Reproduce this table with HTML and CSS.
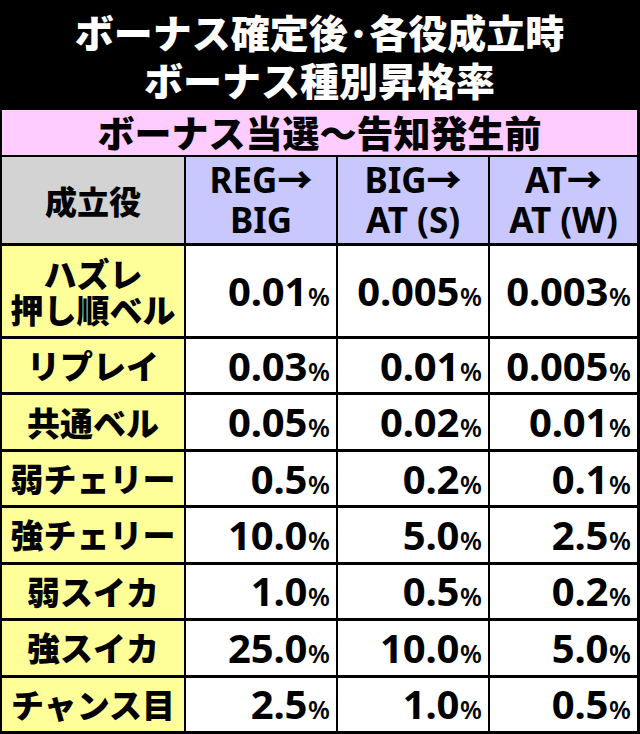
FILE: index.html
```html
<!DOCTYPE html>
<html lang="ja">
<head>
<meta charset="utf-8">
<title>ボーナス種別昇格率</title>
<link rel="stylesheet" href="styles.css">
</head>
<body>
<div class="page">
  <header class="title">
    <div class="title-line">ボーナス確定後<span class="dot">･</span>各役成立時</div>
    <div class="title-line">ボーナス種別昇格率</div>
  </header>
  <div class="band">ボーナス当選〜告知発生前</div>
  <div class="table">
    <div class="cell head-role">成立役</div>
    <div class="cell head-col"><span>REG<span class="arrow">→</span></span><span>BIG</span></div>
    <div class="cell head-col"><span>BIG<span class="arrow">→</span></span><span>AT (S)</span></div>
    <div class="cell head-col"><span>AT<span class="arrow">→</span></span><span>AT (W)</span></div>

    <div class="cell role two"><span>ハズレ</span><span>押し順ベル</span></div>
    <div class="cell num"><span class="val">0.01<span class="pct">%</span></span></div>
    <div class="cell num"><span class="val">0.005<span class="pct">%</span></span></div>
    <div class="cell num"><span class="val">0.003<span class="pct">%</span></span></div>

    <div class="cell role">リプレイ</div>
    <div class="cell num"><span class="val">0.03<span class="pct">%</span></span></div>
    <div class="cell num"><span class="val">0.01<span class="pct">%</span></span></div>
    <div class="cell num"><span class="val">0.005<span class="pct">%</span></span></div>

    <div class="cell role">共通ベル</div>
    <div class="cell num"><span class="val">0.05<span class="pct">%</span></span></div>
    <div class="cell num"><span class="val">0.02<span class="pct">%</span></span></div>
    <div class="cell num"><span class="val">0.01<span class="pct">%</span></span></div>

    <div class="cell role">弱チェリー</div>
    <div class="cell num"><span class="val">0.5<span class="pct">%</span></span></div>
    <div class="cell num"><span class="val">0.2<span class="pct">%</span></span></div>
    <div class="cell num"><span class="val">0.1<span class="pct">%</span></span></div>

    <div class="cell role">強チェリー</div>
    <div class="cell num"><span class="val">10.0<span class="pct">%</span></span></div>
    <div class="cell num"><span class="val">5.0<span class="pct">%</span></span></div>
    <div class="cell num"><span class="val">2.5<span class="pct">%</span></span></div>

    <div class="cell role">弱スイカ</div>
    <div class="cell num"><span class="val">1.0<span class="pct">%</span></span></div>
    <div class="cell num"><span class="val">0.5<span class="pct">%</span></span></div>
    <div class="cell num"><span class="val">0.2<span class="pct">%</span></span></div>

    <div class="cell role">強スイカ</div>
    <div class="cell num"><span class="val">25.0<span class="pct">%</span></span></div>
    <div class="cell num"><span class="val">10.0<span class="pct">%</span></span></div>
    <div class="cell num"><span class="val">5.0<span class="pct">%</span></span></div>

    <div class="cell role">チャンス目</div>
    <div class="cell num"><span class="val">2.5<span class="pct">%</span></span></div>
    <div class="cell num"><span class="val">1.0<span class="pct">%</span></span></div>
    <div class="cell num"><span class="val">0.5<span class="pct">%</span></span></div>
  </div>
</div>
</body>
</html>
```

FILE: styles.css
```css
html, body {
  margin: 0;
  padding: 0;
  background: #000;
}

.page {
  width: 640px;
  height: 734px;
  box-sizing: border-box;
  padding: 0 3px 3px 2px;
  background: #000;
  display: flex;
  flex-direction: column;
  font-family: "Noto Sans CJK JP", "Noto Sans", sans-serif;
  color: #000;
}

.title {
  height: 110px;
  flex: none;
  display: flex;
  flex-direction: column;
  align-items: center;
  justify-content: center;
  color: #fff;
  font-weight: 900;
  font-size: 39px;
  line-height: 48px;
  padding-bottom: 1px;
  box-sizing: border-box;
}

.dot {
  display: inline-block;
  margin: 0 1px;
}

.band {
  height: 45px;
  flex: none;
  margin-bottom: 2px;
  background: #ffccff;
  display: flex;
  align-items: center;
  justify-content: center;
  font-weight: 900;
  font-size: 37px;
  line-height: 1;
}

.table {
  flex: 1;
  display: grid;
  grid-template-columns: 182px 150px 150px 147px;
  grid-template-rows: 86px 90px repeat(7, 1fr);
  column-gap: 2px;
  row-gap: 3px;
}

.cell {
  display: flex;
  align-items: center;
  background: #fff;
  overflow: hidden;
}

.head-role {
  background: #d3d3d3;
  justify-content: center;
  font-weight: 900;
  font-size: 32px;
}

.head-col {
  background: #c8c8ff;
  flex-direction: column;
  justify-content: center;
  font-family: "Noto Sans", "Noto Sans CJK JP", sans-serif;
  font-weight: 700;
  font-size: 35px;
  line-height: 40px;
  padding-bottom: 2px;
  box-sizing: border-box;
}

.arrow {
  font-family: "Noto Sans CJK JP", sans-serif;
  font-weight: 900;
}

.role {
  background: #ffff99;
  justify-content: center;
  font-weight: 900;
  font-size: 33px;
  line-height: 1;
  white-space: nowrap;
}

.role.two {
  flex-direction: column;
  line-height: 36px;
}

.num {
  justify-content: flex-end;
  padding-right: 6px;
  font-family: "Noto Sans", sans-serif;
  font-weight: 700;
  font-size: 40px;
  line-height: 1;
  white-space: nowrap;
}

.val {
  letter-spacing: -0.2px;
}

.pct {
  font-size: 25px;
  font-weight: 600;
  margin-left: 1px;
  letter-spacing: 0;
}
```
